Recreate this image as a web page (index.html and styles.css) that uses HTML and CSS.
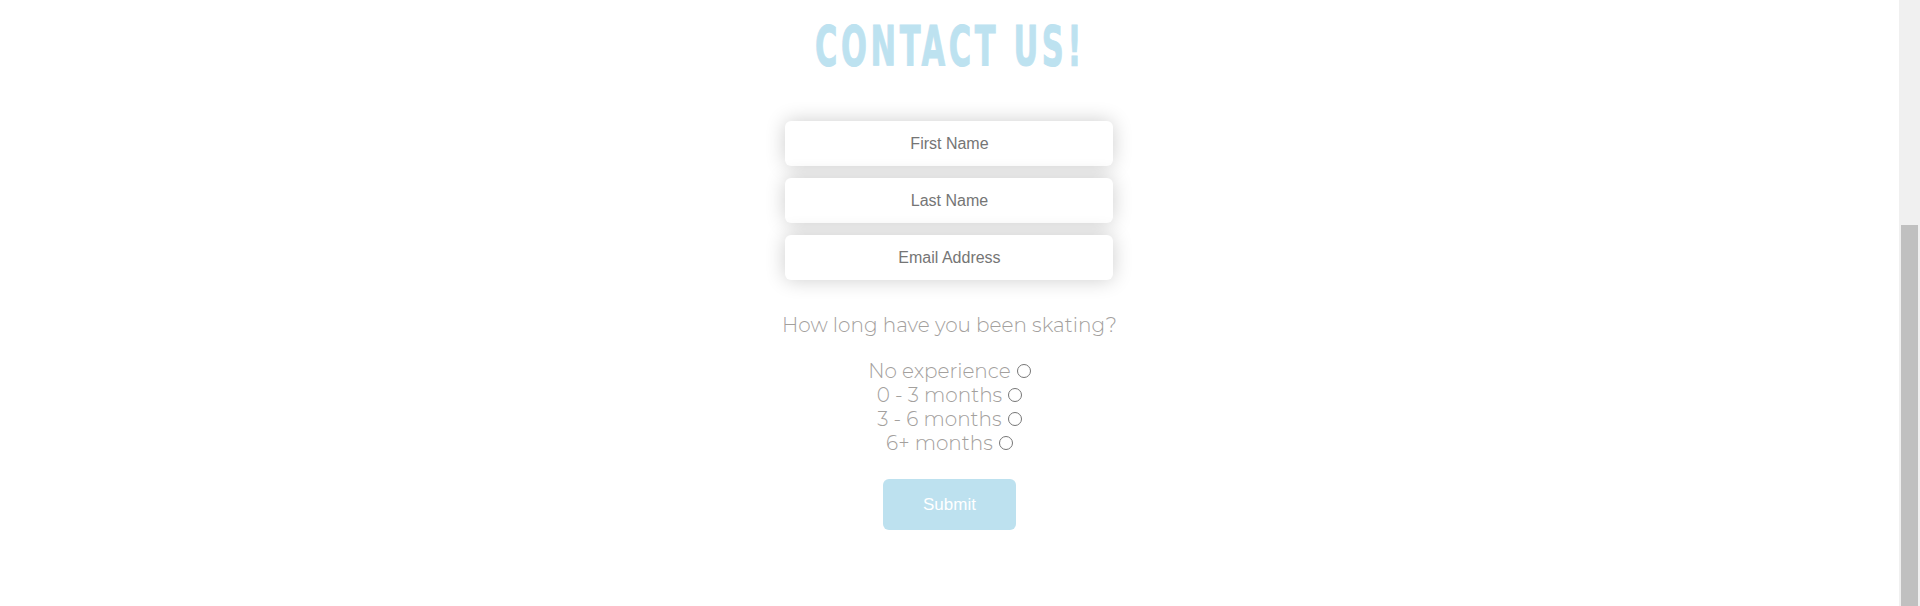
FILE: index.html
```html
<!DOCTYPE html>
<html lang="en">
<head>
<meta charset="utf-8">
<title>Contact Us</title>
<link rel="stylesheet" href="styles.css">
</head>
<body>
<section class="contact" id="contact">
  <h1 class="contact-title">CONTACT US!</h1>
  <form class="contact-form">
    <div class="fields">
      <input class="field" type="text" placeholder="First Name">
      <input class="field" type="text" placeholder="Last Name">
      <input class="field" type="email" placeholder="Email Address">
    </div>
    <p class="question">How long have you been skating?</p>
    <div class="options">
      <label class="option">No experience <input type="radio" name="exp"></label>
      <label class="option">0 - 3 months <input type="radio" name="exp"></label>
      <label class="option">3 - 6 months <input type="radio" name="exp"></label>
      <label class="option">6+ months <input type="radio" name="exp"></label>
    </div>
    <button class="submit" type="button">Submit</button>
  </form>
</section>
<div class="scrollbar" aria-hidden="true"><div class="scrollbar-thumb"></div></div>
</body>
</html>
```

FILE: styles.css
```css
* { box-sizing: border-box; }
html, body { margin: 0; padding: 0; background: #fff; }
body {
  font-family: "Liberation Sans", Arial, sans-serif;
  height: 606px;
  overflow: hidden;
  padding-right: 21px;
}

.contact {
  height: 606px;
  display: flex;
  flex-direction: column;
  align-items: center;
  padding-top: 17px;
}

.contact-title {
  margin: 0;
  font-family: "DejaVu Sans Condensed", "DejaVu Sans", sans-serif;
  font-weight: bold;
  font-size: 56px;
  line-height: 58px;
  letter-spacing: 6px;
  color: #bde2f0;
  -webkit-text-stroke: 1px #bde2f0;
  transform: scaleX(0.605);
}

.contact-form {
  display: flex;
  flex-direction: column;
  align-items: center;
  margin-top: 46px;
}

.fields {
  display: flex;
  flex-direction: column;
  gap: 12px;
}

.field {
  width: 328px;
  height: 45px;
  border: none;
  border-radius: 6px;
  background: #fff;
  box-shadow: 0 0 20px rgba(0, 0, 0, 0.2);
  font-family: "Liberation Sans", Arial, sans-serif;
  font-size: 16px;
  text-align: center;
  color: #555;
  outline: none;
}
.field::placeholder { color: #757575; }

.question {
  margin: 33px 0 0;
  font-family: Montserrat, "Open Sans", sans-serif;
  font-weight: 300;
  font-size: 20px;
  line-height: 24px;
  color: #a3a09d;
}

.options {
  display: flex;
  flex-direction: column;
  align-items: center;
  margin-top: 22px;
}

.option {
  font-family: Montserrat, "Open Sans", sans-serif;
  font-weight: 300;
  font-size: 20px;
  line-height: 24px;
  color: #a3a09d;
}
.option input { margin: 0 0 1px 1px; width: 14px; height: 14px; }

.submit {
  margin-top: 24px;
  width: 133px;
  height: 51px;
  border: none;
  border-radius: 6px;
  background: #bde1ef;
  color: #fff;
  font-family: "Liberation Sans", Arial, sans-serif;
  font-size: 17px;
}

.scrollbar {
  position: fixed;
  top: 0;
  right: 0;
  bottom: 0;
  width: 21px;
  background: #f0f0f0;
  padding: 225px 2px 0;
}
.scrollbar-thumb {
  height: 100%;
  background: #c0c0c0;
}
```
